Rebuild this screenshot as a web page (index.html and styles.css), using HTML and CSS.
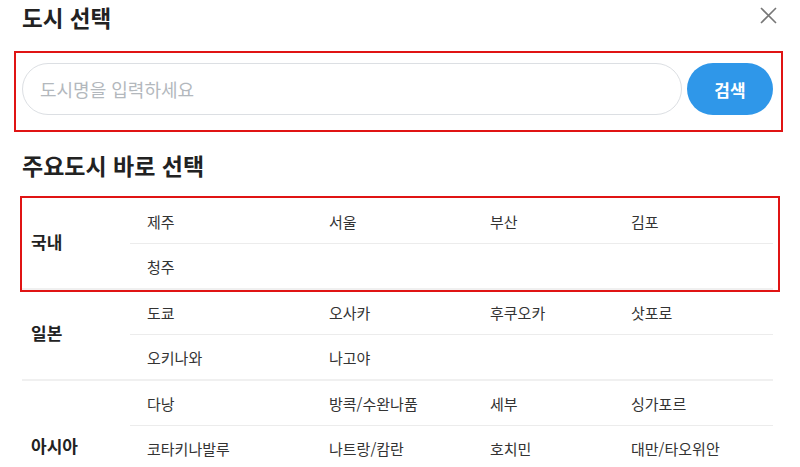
FILE: index.html
```html
<!DOCTYPE html>
<html lang="ko">
<head>
<meta charset="utf-8">
<title>도시 선택</title>
<link rel="stylesheet" href="styles.css">
</head>
<body>
<div class="modal">
  <header class="modal-head">
    <h1 class="modal-title">도시 선택</h1>
    <button class="close-btn" aria-label="닫기">
      <svg width="17" height="17" viewBox="0 0 17 17"><path d="M1 1 L16 16 M16 1 L1 16" stroke="#777" stroke-width="1.6" fill="none"/></svg>
    </button>
  </header>

  <div class="search-hl">
    <form class="search-row">
      <input class="search-input" type="text" placeholder="도시명을 입력하세요">
      <button class="search-btn" type="button">검색</button>
    </form>
  </div>

  <h2 class="section-title">주요도시 바로 선택</h2>

  <div class="groups">
    <div class="group group-hl">
      <div class="group-name">국내</div>
      <div class="city-rows">
        <div class="city-row"><span class="city">제주</span><span class="city">서울</span><span class="city">부산</span><span class="city">김포</span></div>
        <div class="city-row"><span class="city">청주</span><span class="city"></span><span class="city"></span><span class="city"></span></div>
      </div>
    </div>
    <div class="group">
      <div class="group-name">일본</div>
      <div class="city-rows">
        <div class="city-row"><span class="city">도쿄</span><span class="city">오사카</span><span class="city">후쿠오카</span><span class="city">삿포로</span></div>
        <div class="city-row"><span class="city">오키나와</span><span class="city">나고야</span><span class="city"></span><span class="city"></span></div>
      </div>
    </div>
    <div class="group">
      <div class="group-name">아시아</div>
      <div class="city-rows city-rows-more">
        <div class="city-row"><span class="city">다낭</span><span class="city">방콕/수완나품</span><span class="city">세부</span><span class="city">싱가포르</span></div>
        <div class="city-row"><span class="city">코타키나발루</span><span class="city">나트랑/캄란</span><span class="city">호치민</span><span class="city">대만/타오위안</span></div>
      </div>
    </div>
  </div>
</div>
</body>
</html>
```
FILE: styles.css
```css
html, body {
  margin: 0;
  padding: 0;
  height: 100%;
  overflow: hidden;
  background: #fff;
}
body {
  font-family: "Noto Sans CJK KR", "Noto Sans", sans-serif;
  color: #222;
}
.modal {
  padding: 0 27px 0 22px;
}
.modal-head {
  display: flex;
  justify-content: space-between;
  align-items: flex-start;
  height: 51px;
}
.modal-title {
  margin: 0;
  padding-top: 2px;
  font-size: 22.5px;
  line-height: 30px;
  font-weight: 700;
  color: #222;
}
.close-btn {
  margin: 7px -4px 0 0;
  padding: 0;
  border: 0;
  background: none;
  width: 17px;
  height: 17px;
  line-height: 0;
}
.search-hl {
  margin: 0 -10px 0 -8px;
  border: 2px solid #e01414;
  padding: 10px 8px 15px 6px;
}
.search-row {
  display: flex;
  gap: 5px;
  margin: 0;
}
.search-input {
  flex: 1;
  height: 52px;
  box-sizing: border-box;
  border: 1px solid #dcdfe3;
  border-radius: 26px;
  padding: 0 17px;
  font-family: inherit;
  font-size: 18px;
  color: #222;
  outline: none;
}
.search-input::placeholder {
  color: #b3b8bd;
}
.search-btn {
  width: 86px;
  height: 52px;
  border: 0;
  border-radius: 26px;
  background: #2f97e9;
  color: #fff;
  font-family: inherit;
  font-size: 17px;
  font-weight: 700;
}
.section-title {
  margin: 18px 0 0;
  font-size: 23px;
  line-height: 30px;
  font-weight: 700;
  color: #222;
}
.groups {
  margin-top: 19px;
}
.group {
  display: flex;
  border-bottom: 2px solid #f0f0f0;
}
.group-hl {
  position: relative;
}
.group-hl::after {
  content: "";
  position: absolute;
  top: -3px;
  left: -2px;
  right: -7px;
  bottom: -4px;
  border: 2px solid #e01414;
  pointer-events: none;
}
.group-name {
  width: 108px;
  flex: none;
  box-sizing: border-box;
  padding: 0 0 5px 9px;
  display: flex;
  align-items: center;
  font-size: 17px;
  font-weight: 700;
  color: #222;
}
.city-rows {
  flex: 1;
}
.city-rows-more {
  padding-bottom: 45px;
}
.city-row {
  display: grid;
  grid-template-columns: 182fr 161fr 141fr 159fr;
  height: 44px;
  align-items: center;
}
.city-row + .city-row {
  border-top: 1px solid #ececec;
}
.city {
  padding-left: 17px;
  font-size: 15px;
  color: #333;
}
```
